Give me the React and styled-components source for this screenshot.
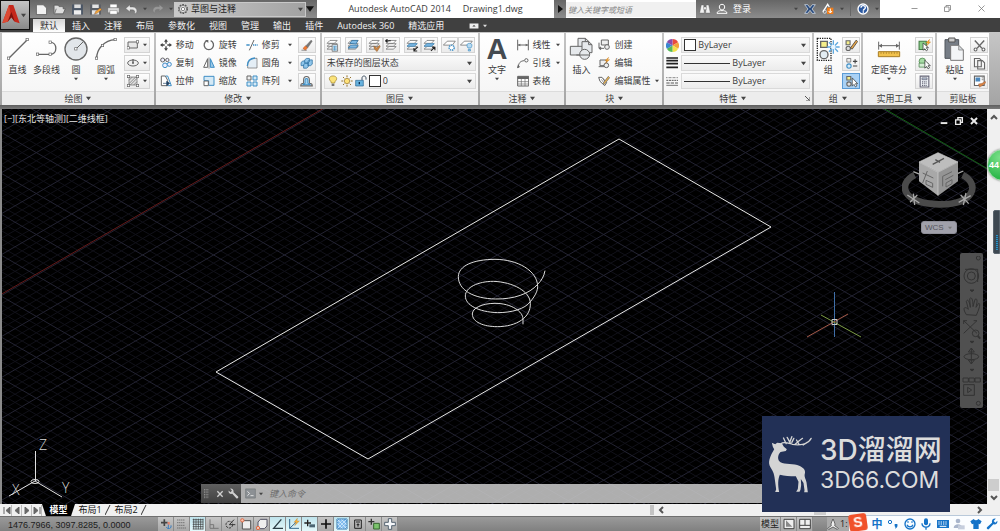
import React from 'react';
import styled, { createGlobalStyle } from 'styled-components';

const GlobalStyle = createGlobalStyle`
  * {
    box-sizing: border-box;
  }
  html,
  body,
  #root {
    height: 100%;
  }
  body {
    margin: 0;
    overflow: hidden;
    font-family: 'Open Sans', 'Noto Sans CJK SC', sans-serif;
    font-size: 9px;
    line-height: 12px;
    color: #3c3c3c;
  }
  button,
  input,
  select {
    font: inherit;
    color: inherit;
    margin: 0;
    padding: 0;
    border: 0;
    border-radius: 0;
    background: none;
  }
  svg {
    display: block;
    flex: none;
  }
`;

const Window = styled.div`
  display: flex;
  flex-direction: column;
  height: 100vh;
  background: #404040;
`;

/* ---------- title bar and tabs ---------- */

const Header = styled.header`
  display: flex;
  flex: none;
  height: 32px;
`;

const AppButton = styled.button`
  display: flex;
  align-items: center;
  width: 30px;
  height: 30px;
  flex: none;
  border: 1px solid #111;
  background: linear-gradient(#c4c4c4, #8a8a8a);
`;

const HeaderRows = styled.div`
  flex: 1;
  min-width: 0;
  display: flex;
  flex-direction: column;
`;

const TitleBar = styled.div`
  display: flex;
  height: 18px;
  background: #fff;
`;

const Steel = styled.div`
  display: flex;
  align-items: center;
  flex: none;
  width: ${(p) => p.$width}px;
  background: linear-gradient(#666, #8c8c8c);
  color: #fff;
`;

const QuickButtons = styled.div`
  display: flex;
  align-items: center;
  gap: 5px;
  width: 144px;
  padding-left: 5px;
`;

const IconButton = styled.button`
  display: flex;
  align-items: center;
  justify-content: center;
  flex: none;
`;

const Workspace = styled.label`
  display: flex;
  align-items: center;
  gap: 2px;
  width: 132px;
  height: 15px;
  padding: 0 2px;
  background: linear-gradient(90deg, #c9c9c9, #a2a2a2);
  border: 1px solid #c8c8c8;
  color: #222;
`;

const PlainSelect = styled.select`
  appearance: none;
  flex: 1;
  min-width: 0;
  height: 12px;
  line-height: 12px;
  outline: none;
`;

const Title = styled.h1`
  flex: 1;
  margin: 0;
  display: flex;
  align-items: center;
  justify-content: center;
  gap: 12px;
  font-size: 9px;
  font-weight: 400;
  white-space: nowrap;
`;

const SearchBox = styled.input`
  width: 130px;
  height: 15px;
  align-self: center;
  background: #f0f0f0;
  font-size: 8px;
  font-style: italic;
  padding: 0 2px;
  outline: none;
  &::placeholder {
    color: #888;
    opacity: 1;
  }
`;

const UserTools = styled.div`
  display: flex;
  align-items: center;
  gap: 5px;
  padding-left: 3px;
`;

const SteelTools = styled.div`
  display: flex;
  align-items: center;
  gap: 6px;
  margin-left: auto;
  padding-right: 1px;
`;

const SteelLine = styled.span`
  width: 1px;
  height: 14px;
  background: #666;
`;

const WindowButtons = styled.div`
  display: flex;
  align-items: center;
  justify-content: space-around;
  width: 120px;
  padding: 0 2px 2px 18px;
`;

const Tabs = styled.nav`
  display: flex;
  align-items: flex-end;
  height: 14px;
  padding-left: 3px;
  background: #404040;
`;

const Tab = styled.button`
  height: 13px;
  line-height: 12px;
  padding: 0 7px;
  white-space: nowrap;
  color: ${(p) => (p.$active ? '#333' : '#f0f0f0')};
  background: ${(p) => (p.$active ? 'linear-gradient(#d5d5d5, #fff)' : 'none')};
`;

const TabMenu = styled(IconButton)`
  gap: 4px;
  height: 13px;
  padding-left: 18px;
`;

/* ---------- ribbon ---------- */

const Ribbon = styled.section`
  display: flex;
  flex: none;
  height: 77px;
  gap: 2px;
  padding: 1px 11px 4px 2px;
  background: linear-gradient(#c6c6c6, #a4a4a4 73px, #5f5f5f 73px, #7a7a7a);
`;

const PanelBox = styled.section`
  flex: ${(p) => p.$grow} 1 0;
  min-width: 0;
  display: flex;
  flex-direction: column;
  background: #fff;
`;

const PanelBody = styled.div`
  display: flex;
  flex: 1;
  padding: 3px ${(p) => p.$right || 2}px 0 ${(p) => p.$left || 2}px;
  gap: ${(p) => p.$gap || 0}px;
  background: linear-gradient(#fff, #f6f6f6);
`;

const PanelTitle = styled.button`
  display: flex;
  align-items: center;
  justify-content: center;
  gap: 4px;
  height: 14px;
  background: #ededed;
  border-top: 1px solid #dcdcdc;
`;

const Launcher = styled.span`
  margin-right: 2px;
`;

const TitleLabel = styled.span`
  display: flex;
  align-items: center;
  justify-content: center;
  gap: 4px;
  flex: 1;
`;

const BigTool = styled.button`
  display: flex;
  flex-direction: column;
  align-items: center;
  flex: none;
  width: ${(p) => p.$width || 30}px;
  padding-top: 1px;
  white-space: nowrap;
  & > span {
    margin: 3px 0 1px;
  }
`;

const Stack = styled.div`
  display: grid;
  grid-template-rows: repeat(3, 18px);
  align-items: center;
  flex: none;
  margin-left: ${(p) => (p.$push ? 'auto' : 0)};
`;

const SmallTool = styled.button`
  display: flex;
  align-items: center;
  gap: 4px;
  width: ${(p) => p.$width}px;
  white-space: nowrap;
  & > svg:nth-of-type(2) {
    margin-left: auto;
  }
`;

const FramedTool = styled.button`
  display: flex;
  align-items: center;
  justify-content: center;
  width: ${(p) => p.$width || 18}px;
  height: 16px;
  gap: 4px;
  border: 1px solid ${(p) => (p.$active ? '#5b9bd5' : '#d4d4d4')};
  background: ${(p) => (p.$active ? '#a9d1f5' : 'linear-gradient(#fdfdfd, #ebebeb)')};
`;

const LayerPanel = styled.div`
  display: grid;
  grid-template-rows: repeat(3, 18px);
  align-items: center;
  flex: 1;
  min-width: 0;
`;

const ToolRow = styled.div`
  display: flex;
  justify-content: space-between;
`;

const ToolGroup = styled.div`
  display: flex;
`;

const Combo = styled.label`
  display: flex;
  align-items: center;
  gap: 2px;
  min-width: 0;
  height: 16px;
  padding: 0 3px 0 2px;
  border: 1px solid #dadada;
  background: linear-gradient(#fafafa, #ececec);
`;

const PropertyGrid = styled.div`
  display: grid;
  grid-template-columns: 13px minmax(0, 1fr);
  grid-template-rows: repeat(3, 18px);
  align-items: center;
  flex: 1;
  column-gap: 2px;
`;

const Swatch = styled.span`
  flex: none;
  width: 12px;
  height: 12px;
  border: 1px solid #333;
  background: #fff;
`;

const LineSample = styled.span`
  flex: none;
  width: 46px;
  height: 1px;
  background: #333;
`;

/* ---------- drawing area ---------- */

const Workarea = styled.main`
  display: flex;
  flex: 1;
  min-height: 0;
  position: relative;
  border-left: 2px solid #8a8a8a;
`;

const Canvas = styled.div`
  position: relative;
  flex: 1;
  min-width: 0;
  overflow: hidden;
  background: #000;
`;

const Drawing = styled.svg`
  position: absolute;
  inset: 0;
  width: 100%;
  height: 100%;
`;

const ViewLabel = styled.div`
  position: absolute;
  left: 2px;
  top: 4px;
  color: #e4e4e4;
`;

const MdiButtons = styled.div`
  position: absolute;
  right: 8px;
  top: 7px;
  display: flex;
  gap: 5px;
`;

const ViewCube = styled.div`
  position: absolute;
  right: 11px;
  top: 42px;
`;

const WcsSelect = styled.button`
  position: absolute;
  right: 30px;
  top: 112px;
  display: flex;
  align-items: center;
  justify-content: space-between;
  width: 36px;
  height: 13px;
  padding: 0 4px 0 3px;
  border: 1px solid #8e8e98;
  border-radius: 3px;
  background: #a0a0aa;
  color: #54545c;
  font-family: 'Liberation Sans', sans-serif;
  font-size: 8px;
`;

const NavBar = styled.div`
  position: absolute;
  right: 4px;
  top: 144px;
  width: 23px;
  height: 155px;
  display: flex;
  flex-direction: column;
  align-items: center;
  justify-content: center;
  border-radius: 2px;
  background: #505050;
`;

const CommandLine = styled.div`
  position: absolute;
  left: 199px;
  right: 90px;
  bottom: 1px;
  display: flex;
  height: 19px;
  background: rgba(200, 200, 200, 0.87);
`;

const CommandHandle = styled.div`
  display: flex;
  align-items: center;
  gap: 4px;
  width: 40px;
  padding-left: 1px;
  background: linear-gradient(#606060, #404040);
`;

const CommandPrompt = styled.label`
  display: flex;
  align-items: center;
  flex: 1;
  gap: 3px;
  padding-left: 4px;
`;

const CommandInput = styled.input`
  flex: 1;
  min-width: 0;
  margin-left: 3px;
  font-style: italic;
  outline: none;
  &::placeholder {
    color: #6d6d6d;
    opacity: 1;
  }
`;

const VerticalScroll = styled.div`
  flex: none;
  display: flex;
  flex-direction: column;
  align-items: center;
  width: 13px;
  padding: 4px 0 2px;
  background: #f0f0f0;
`;

const VerticalThumb = styled.div`
  width: 11px;
  height: 12px;
  margin: auto 0 3px;
  background: #cdcdcd;
`;

const Ball = styled.div`
  position: absolute;
  right: -19px;
  top: 40px;
  width: 32px;
  height: 32px;
  border: 1px solid #9fd6a8;
  border-radius: 50%;
  background: radial-gradient(circle at 40% 25%, #7be08a, #2db84a 70%);
  color: #fff;
  font: bold 9px/30px 'Liberation Sans', sans-serif;
  padding-left: 1px;
  box-shadow: 0 0 2px #777;
`;

const SideMeter = styled.div`
  position: absolute;
  right: 0;
  top: 101px;
  width: 7px;
  height: 44px;
  padding: 24px 0 3px 2px;
  border: 1px solid #59636c;
  background: #3d4750;
  border-radius: 2px 0 0 2px;
`;

const MeterFill = styled.div`
  width: 2px;
  height: 15px;
  background: repeating-linear-gradient(#2b91c6 0 1px, #24566f 1px 2px);
`;

const Watermark = styled.aside`
  position: absolute;
  right: 50px;
  bottom: -8px;
  z-index: 2;
  display: flex;
  align-items: center;
  gap: 6px;
  width: 188px;
  height: 96px;
  padding-left: 5px;
  background: #223056;
  color: #dcdcdc;
`;

const WatermarkText = styled.div`
  display: flex;
  flex-direction: column;
  white-space: nowrap;
`;

const Brand = styled.strong`
  font-family: Inter, 'Noto Sans CJK SC', sans-serif;
  font-size: 28px;
  line-height: 32px;
  font-weight: 500;
`;

const Domain = styled.span`
  font-family: Inter, sans-serif;
  font-size: 23px;
  line-height: 28px;
  font-weight: 400;
`;

/* ---------- bottom rows ---------- */

const LayoutRow = styled.div`
  display: flex;
  align-items: center;
  flex: none;
  height: 12px;
  padding: 0 16px 0 2px;
  background: #f0f0f0;
`;

const NavArrow = styled(IconButton)`
  width: 10px;
  height: 11px;
  border-right: 1px solid #bbb;
`;

const LayoutTab = styled.button`
  display: flex;
  justify-content: center;
  width: ${(p) => (p.$active ? 33 : 30)}px;
  height: 12px;
  line-height: 12px;
  font-weight: ${(p) => (p.$active ? 700 : 400)};
  color: ${(p) => (p.$active ? '#fff' : '#111')};
  background: ${(p) => (p.$active ? '#000' : 'none')};
  clip-path: ${(p) => (p.$active ? 'polygon(0 0, 100% 0, 88% 100%, 12% 100%)' : 'none')};
`;

const Divider = styled.div`
  width: 4px;
  height: 10px;
  margin-right: 3px;
  background: #c4c4c4;
`;

const ScrollTrack = styled.div`
  flex: 0 1 327px;
  display: flex;
  align-items: center;
  justify-content: space-between;
`;

const ScrollThumb = styled.div`
  width: 12px;
  height: 10px;
  margin: 0 150px 0 auto;
  background: #cdcdcd;
`;

const RowFill = styled.div`
  flex: 1;
`;

const StatusBar = styled.footer`
  display: flex;
  align-items: stretch;
  flex: none;
  height: 15px;
  border-top: 1px solid #6f6f6f;
  background: linear-gradient(#9a9a9a, #808080);
`;

const Coordinates = styled.output`
  width: 158px;
  padding-left: 8px;
  line-height: 16px;
  color: #1c1c1c;
  font-family: 'Liberation Sans', sans-serif;
  white-space: nowrap;
`;

const StatusToggle = styled.button`
  display: flex;
  align-items: center;
  justify-content: center;
  flex: none;
  width: ${(p) => p.$width || 16}px;
  border: solid #8b8b8b;
  border-width: 0 1px 0 0;
  background: ${(p) => (p.$active ? 'linear-gradient(#bfe3ec, #e4f8fb)' : 'linear-gradient(#c6c6c6, #a8a8a8)')};
  color: #222;
`;

const StatusRight = styled.div`
  display: flex;
  margin-left: auto;
  padding-right: 151px;
`;

const ScaleButton = styled.button`
  display: flex;
  align-items: center;
  gap: 1px;
  width: 22px;
  margin-left: 14px;
  background: #aaa;
  color: #222;
`;

const InputMethod = styled.div`
  position: fixed;
  right: 0;
  bottom: 0;
  z-index: 3;
  display: flex;
  align-items: center;
  justify-content: space-between;
  width: 151px;
  height: 16px;
  padding: 0 2px 0 0;
  border-top: 1px solid #b9c9da;
  background: #fbfdff;
  color: #1673c8;
`;

const SogouLogo = styled.div`
  align-self: flex-end;
  width: 18px;
  height: 17px;
  border-radius: 3px;
  background: #f0512a;
  color: #fff;
  font: bold 14px/16px 'Liberation Sans', sans-serif;
  text-align: center;
  transform: rotate(-8deg);
`;

const ImeMode = styled.button`
  font-size: 11px;
  font-weight: 700;
`;

/* ---------- icons, drawn on a 36 unit grid (small) or 72 unit grid (large) ---------- */

const G = '#666';
const B = '#3f8fc6';
const node = (x, y) => <rect x={x - 4} y={y - 4} width="7" height="7" fill="#fff" stroke={G} strokeWidth="2" />;
const sheets = (
  <g fill="#fff" stroke={G} strokeWidth="2">
    <path d="M3 28l8-7h20l-8 7z" />
    <path d="M3 20l8-7h20l-8 7z" />
    <path d="M3 12l8-8h20l-8 8z" />
  </g>
);

const icons = {
  // quick access
  new: <path d="M4 5h19l9 9v18H4z" fill="#f2f2f2" stroke="#555" strokeWidth="2" />,
  open: <path d="M3 30V6h11l3 4h11v6h6l-6 14zM9 16l-4 12" fill="#ddd" stroke="#555" strokeWidth="2" />,
  save: <><path d="M3 4h30v28H3z" fill="#4b5665" /><path d="M9 4h18v10H9z" fill="#ddd" /><path d="M8 20h20v12H8z" fill="#eee" /></>,
  saveAs: <><path d="M3 4h30v28H3z" fill="#5a5f66" /><path d="M9 4h18v10H9zM8 20h20v12H8z" fill="#e4e4e4" /><path d="M15 31l4-8 12-9 4 5-12 9z" fill="#f1a63a" stroke="#743" /></>,
  print: <><path d="M9 4h18v9H9z" fill="#fff" /><path d="M2 13h32v14H2z" fill="#d8d8d8" stroke="#444" /><path d="M8 21h20v10H8z" fill="#fff" stroke="#555" /></>,
  undo: <path d="M2 15L14 5v6h7c8 0 12 6 12 11s-3 7-7 8c3-7 0-11-6-11h-6v6z" fill="#e6e6e6" stroke="#555" />,
  redo: <path d="M34 15L22 5v6h-7C7 11 3 17 3 22s3 7 7 8c-3-7 0-11 6-11h6v6z" fill="#999" stroke="#7a7a7a" />,
  gear: <><circle cx="18" cy="18" r="13" fill="none" stroke="#555" strokeWidth="4" strokeDasharray="5 3.2" /><circle cx="18" cy="18" r="11" fill="#ddd" stroke="#555" strokeWidth="2" /><circle cx="18" cy="18" r="5" fill="#fff" stroke="#555" strokeWidth="2" /></>,
  binoculars: <g fill="#f2f2f2" stroke="#555"><path d="M7 6h7l2 24H2zM22 6h7l5 24H20z" /><path d="M14 12h8v8h-8z" /></g>,
  user: <g fill="none" stroke="#fff" strokeWidth="3"><path d="M18 4c-6 0-8 4-8 8s3 9 8 9 8-5 8-9-2-8-8-8zM3 31c0-6 6-7 10-8h10c4 1 10 2 10 8z" /></g>,
  exchange: <path d="M2 5h9l7 9 7-9h9L24 18l10 13h-9l-7-9-7 9H2l10-13z" fill="#27497c" stroke="#e4edf8" strokeWidth="2" />,
  app360: <><path d="M3 26L17 4l5 8" fill="none" stroke="#fff" strokeWidth="4" /><circle cx="8" cy="26" r="5" fill="none" stroke="#fff" strokeWidth="2" /><path d="M15 14h19v19H15z" fill="#ee7d1c" /><path d="M25 17v12m-5-5l5 6 5-6" fill="none" stroke="#fff" strokeWidth="3" /></>,
  help: <><circle cx="18" cy="18" r="15" fill="#2c59a0" stroke="#fff" strokeWidth="4" /><path d="M12 14c0-8 13-8 13 0 0 5-6 4-6 9M19 25v4" fill="none" stroke="#fff" strokeWidth="4" /></>,
  ribbonToggle: <><path d="M2 9h32v18H2z" fill="#eee" /><path d="M12 20l6-6 6 6z" fill="#333" /></>,
  minimize: <path d="M6 18h24" stroke="#777" strokeWidth="3" />,
  restore: <path d="M6 12h18v18H6zM12 12V6h18v18h-6" fill="none" stroke="#777" strokeWidth="3" />,
  close: <path d="M6 6l24 24M30 6L6 30" stroke="#777" strokeWidth="3" />,

  // draw
  line: <><path d="M7 65L64 8" stroke={G} strokeWidth="4" />{node(8, 64)}{node(64, 8)}</>,
  polyline: <><path d="M8 52h38c22 0 22-36 0-36" fill="none" stroke={G} strokeWidth="4" />{node(8, 52)}{node(46, 52)}{node(46, 16)}</>,
  circle: <><circle cx="36" cy="36" r="33" fill="#e2e6ea" stroke={G} strokeWidth="4" /><path d="M36 36L58 14" stroke={G} strokeWidth="3" />{node(36, 36)}</>,
  arc: <><path d="M8 64C8 36 30 10 64 8" fill="none" stroke={G} strokeWidth="4" />{node(8, 64)}{node(26, 26)}{node(64, 8)}</>,
  rect: <><path d="M3 9h28v18H3z" fill="#e8e8e8" stroke={G} strokeWidth="3" />{node(4, 27)}{node(32, 9)}</>,
  ellipse: <><ellipse cx="18" cy="18" rx="16" ry="9" fill="#eee" stroke={G} strokeWidth="3" /><path d="M18 6v12M15 18h6" stroke={G} strokeWidth="4" /></>,
  hatch: <><path d="M6 6h24v24H6z" fill="#e0e0e0" stroke={G} strokeWidth="2" /><path d="M6 16L16 6M6 26L26 6M10 30L30 10M20 30l10-10M2 6h4M30 30h4" stroke={G} strokeWidth="2" />{node(5, 5)}{node(32, 32)}{node(32, 5)}{node(5, 32)}</>,

  // modify
  move: <><path d="M18 5v9M18 22v9M5 18h9M22 18h9" stroke="#444" strokeWidth="4" /><path d="M18 0l6 8H12zM18 36l6-8H12zM0 18l8-6v12zM36 18l-8-6v12z" fill="#444" /></>,
  rotate: <><path d="M23 5A14 14 0 1 1 12 5" fill="none" stroke={G} strokeWidth="4" /><path d="M6 3h10v9z" fill={G} /></>,
  trim: <><path d="M1 18h10M21 18h4M27 18h3M32 18h3" stroke={B} strokeWidth="4" /><path d="M10 34L24 3" stroke={G} strokeWidth="3" /></>,
  copy: <g fill="#eef" strokeWidth="3"><circle cx="8" cy="9" r="6" stroke={G} /><circle cx="22" cy="9" r="5" stroke={G} /><circle cx="15" cy="25" r="7" stroke={B} /><circle cx="28" cy="22" r="6" stroke={B} /></g>,
  mirror: <><path d="M14 5v26H2z" fill="#fff" stroke={G} strokeWidth="3" /><path d="M22 5v26h12z" fill="#9cc9e8" stroke={B} strokeWidth="3" /><path d="M18 1v34" stroke={G} strokeWidth="2" /></>,
  fillet: <><path d="M5 33V25C5 12 15 4 26 4h7v29z" fill="#e4eef6" stroke={G} strokeWidth="2" /><path d="M4 27C4 12 13 4 27 3" fill="none" stroke={B} strokeWidth="4" /></>,
  stretch: <><path d="M4 3h12l7 13v16H4z" fill="#fff" stroke={G} strokeWidth="3" /><path d="M17 3h6l11 29H24" fill="none" stroke={B} strokeWidth="3" /><path d="M9 25h12m-1-6l9 6-9 7z" stroke="#246" strokeWidth="2" fill="#246" /></>,
  scale: <><path d="M3 4h30v27H17V17H3z" fill="#d5e9f5" stroke={B} strokeWidth="3" /><path d="M3 18h13v14H3z" fill="#fff" stroke={G} strokeWidth="3" /></>,
  array: <g fill="#eee" strokeWidth="3"><path d="M3 3h12v12H3z" stroke={G} /><path d="M21 3h12v12H21zM3 21h12v12H3zM21 21h12v12H21z" stroke={B} fill="#d5e9f5" /></g>,
  erase: <><path d="M4 31h15" stroke={G} strokeWidth="2" /><path d="M15 20L31 3l3 3-13 19z" fill="#777" stroke={G} /><path d="M8 26l7-7 6 5-6 7z" fill="#ee7b30" stroke="#943" /></>,
  explode: <g fill="#8fc5ea" stroke="#286c9f" strokeWidth="2"><path d="M3 15l5-4h8v9l-5 4H3z" /><path d="M13 8l5-4h8v9l-5 4h-8zM22 12l5-4h7v12l-5 4h-7zM10 21l5-4h8v10l-5 4h-8z" /></g>,
  offset: <><path d="M2 30h32c0-7-5-7-8-7V14c0-13-16-13-16 0v9c-4 0-8 0-8 7z" fill="none" stroke={G} strokeWidth="3" /><path d="M8 27h20c-1-3-6-2-6-5v-8c0-6-8-6-8 0v8c0 4-5 2-6 5z" fill="#a4d2ee" stroke={B} strokeWidth="3" /></>,

  // layers
  layerProps: <>{sheets}<path d="M17 15h15v19H17z" fill="#e9eef2" stroke={G} strokeWidth="2" /><path d="M19 20h11M19 25h11M19 30h11M24 20v12" stroke={B} strokeWidth="2" /></>,
  layerStack: <>{sheets}<path d="M3 25l8-8h20l-6 8zM8 12l6-8h16l-5 10z" fill="#7eb9e4" stroke="#286c9f" strokeWidth="2" /></>,
  layerMatch: <>{sheets}<path d="M16 19l8 5 8-7 2 4-9 14-8-8z" fill="#c88444" stroke="#753" /></>,
  layerPrev: <>{sheets}<path d="M1 5h15M1 5l6-4M1 5l6 4" stroke="#222" strokeWidth="3" /></>,
  layerDown: <>{sheets}<path d="M3 20l8-7h20l-8 7z" fill="#7eb9e4" stroke={B} strokeWidth="2" /><path d="M33 22L22 32m0-7v8h9" fill="none" stroke="#222" strokeWidth="3" /></>,
  layerUp: <>{sheets}<path d="M3 20l8-7h20l-8 7z" fill="#7eb9e4" stroke={B} strokeWidth="2" /><path d="M22 33l10-10m-7 0h8v8" fill="none" stroke="#222" strokeWidth="3" /></>,
  layerFreeze: <><path d="M1 17L12 6h22l-8 11z" fill="#fff" stroke={G} strokeWidth="2" /><circle cx="24" cy="24" r="7" fill="#fff" stroke={B} strokeWidth="4" strokeDasharray="4 2" /></>,
  layerOff: <><path d="M1 17L12 6h22l-8 11z" fill="#fff" stroke={G} strokeWidth="2" /><path d="M26 12c-9 0-7 8-4 13h8c4-5 5-13-4-13zM23 29h6v4h-6z" fill="#b7daf1" stroke={B} strokeWidth="2" /></>,
  bulb: <><path d="M13 24c0-6-6-7-6-13 0-11 22-11 22 0 0 6-6 7-6 13z" fill="#fbe37a" stroke="#9a7b20" strokeWidth="2" /><path d="M14 26h8v7h-8z" fill="#777" /></>,
  sun: <><circle cx="18" cy="18" r="8" fill="#ffe27a" stroke="#94732c" strokeWidth="2" /><path d="M18 1v6M18 29v6M1 18h6M29 18h6M6 6l4 4M26 26l4 4M30 6l-4 4M6 30l4-4" stroke="#94732c" strokeWidth="3" /></>,
  unlock: <><path d="M21 16V9c0-8 12-8 12 0v5" fill="none" stroke="#456" strokeWidth="3" /><path d="M2 16h23v17H2z" fill="#67b2de" stroke="#28658f" strokeWidth="2" /><path d="M13 21v7" stroke="#135" strokeWidth="4" /></>,

  // annotation and blocks
  dim: <><path d="M2 2v32M34 2v32M3 18h30" stroke={G} strokeWidth="3" /><path d="M3 18l7-4v8zM33 18l-7-4v8z" fill={G} /></>,
  leader: <><path d="M3 33C5 17 10 12 22 11" fill="none" stroke={G} strokeWidth="3" /><circle cx="28" cy="10" r="5" fill="#fff" stroke={G} strokeWidth="3" /><path d="M0 34l3-12 6 8z" fill={G} /></>,
  table: <><path d="M2 4h33v29H2z" fill="#fff" stroke={G} strokeWidth="3" /><path d="M2 4h33v8H2z" fill={G} /><path d="M2 20h33M2 27h33M13 12v21M24 12v21" stroke={G} strokeWidth="2" /></>,
  insert: <g fill="#e6e9ec" stroke={G} strokeWidth="3"><path d="M27 4h22l10 9v24H27zM49 4v9h10" /><path d="M4 28h38v26H4z" /><path d="M39 14h20l10 9v24H39zM59 14v9h10" /><circle cx="47" cy="52" r="15" /><path d="M22 54h40" /></g>,
  blockCreate: <><path d="M10 3h21v15H10z" fill="#eee" stroke={G} strokeWidth="3" /><path d="M3 11v17h15M3 28l5-4v8z" fill="none" stroke={G} strokeWidth="3" /><circle cx="27" cy="24" r="7" fill="#eee" stroke={G} strokeWidth="3" /></>,
  blockEdit: <><path d="M6 9h20v17H6zM2 29h16" fill="#eee" stroke={G} strokeWidth="3" /><circle cx="25" cy="25" r="7" fill="#eee" stroke={G} strokeWidth="3" /><path d="M32 1L21 11h6l-5 8 13-11h-6z" fill="#f8a62d" stroke="#b8701c" /></>,
  blockAttr: <><path d="M2 7h10l14 16-6 9L6 19z" fill="#fff" stroke={G} strokeWidth="3" /><path d="M10 13l7 10M14 10l7 10" stroke={G} strokeWidth="2" /><path d="M15 25L31 4l4 4-16 20z" fill="#e8b14c" stroke={G} strokeWidth="2" /></>,

  // properties
  lineWeight: <path d="M1 3h35M1 11h35M1 20h35M1 31h35" stroke="#222" strokeWidth="5" />,
  lineType: <><path d="M1 8h35" stroke="#555" strokeWidth="3" strokeDasharray="2 2" /><path d="M1 16h35" stroke="#555" strokeWidth="3" strokeDasharray="6 2" /><path d="M1 24h35" stroke="#555" strokeWidth="3" strokeDasharray="10 3" /><path d="M1 31h35" stroke="#777" strokeWidth="3" /></>,

  // groups and utilities
  group: <><path d="M4 4h41v66H4z" fill="none" stroke="#222" strokeWidth="4" strokeDasharray="4 3" /><path d="M14 13h20v18H14z" fill="#f5ee89" stroke={G} strokeWidth="4" /><circle cx="24" cy="53" r="12" fill="#e3edf3" stroke={G} strokeWidth="4" /><path d="M52 10v40M33 30h38M39 16l27 28M66 16L39 44" stroke="#5fa9df" strokeWidth="4" /><circle cx="52" cy="30" r="7" fill="#e9f6ff" /></>,
  ungroup: <><path d="M3 5h11v11H3z" fill="#f5ee89" stroke={G} strokeWidth="3" /><circle cx="9" cy="26" r="6" fill="#ddd" stroke={G} strokeWidth="3" /><path d="M15 25L31 3l4 4-15 21z" fill="#e6a549" stroke="#333" strokeWidth="2" /></>,
  groupEdit: <><path d="M5 4h11v10H5z" fill="#eee" stroke={G} strokeWidth="2" /><circle cx="11" cy="25" r="6" fill="#d6ebf8" stroke={B} strokeWidth="3" /><path d="M22 12h12M28 6v12M22 25h12" stroke="#444" strokeWidth="3" /></>,
  groupSelect: <><path d="M5 4h11v10H5z" fill="#f5ee89" stroke={G} strokeWidth="3" /><circle cx="11" cy="25" r="6" fill="#ddd" stroke={G} strokeWidth="3" /><path d="M20 8v23l5-5 4 7 4-3-4-6h6z" fill="#fff" stroke="#333" strokeWidth="2" /></>,
  measure: <><path d="M5 14v24M67 14v24M7 26h58" stroke={G} strokeWidth="3" /><path d="M5 26l10-6v12zM67 26l-10-6v12z" fill={G} /><path d="M4 44h64v15H4z" fill="#f2c24d" stroke="#a67c24" strokeWidth="3" /><path d="M12 45v6M20 45v6M28 45v6M36 45v6M44 45v6M52 45v6M60 45v6" stroke="#a67c24" strokeWidth="2" /></>,
  quickSelect: <><path d="M3 6h20v23H3z" fill="#8bce88" stroke="#447d46" strokeWidth="3" /><path d="M14 11v20l5-4 4 6 4-3-4-6h6z" fill="#fff" stroke="#333" strokeWidth="2" /><path d="M32 1L22 11h6l-4 8 11-11h-5z" fill="#f9ad31" stroke="#b8701c" /></>,
  selectAll: <><circle cx="12" cy="12" r="9" fill="#a6dba4" stroke="#447d46" strokeWidth="2" /><path d="M3 17h25v11H3z" fill="#d5edd4" stroke="#447d46" strokeWidth="2" /><path d="M19 9v22l5-5 4 7 4-3-4-6h6z" fill="#fff" stroke="#333" strokeWidth="2" /></>,
  calc: <><path d="M6 3h24v30H6z" fill="#eef2f6" stroke="#667" strokeWidth="3" /><path d="M11 8h14v5H11z" fill="#b9c9da" stroke="#667" strokeWidth="2" /><path d="M11 19h14M11 24h14M11 29h14" stroke="#667" strokeWidth="3" strokeDasharray="3 2" /></>,
  paste: <><path d="M6 8h41v56H6z" fill="#767d86" stroke="#50565d" strokeWidth="3" /><path d="M17 3h19v12H17z" fill="#ccc" stroke="#555" strokeWidth="3" /><path d="M23 25h24l14 14v31H23z" fill="#f3f5f7" stroke="#777" strokeWidth="3" /><path d="M47 25v14h14z" fill="#d6dade" stroke="#777" strokeWidth="2" /></>,
  cut: <><path d="M5 4l20 22M31 4L11 26" stroke={G} strokeWidth="4" /><circle cx="7" cy="29" r="4" fill="#fff" stroke={G} strokeWidth="3" /><circle cx="29" cy="29" r="4" fill="#fff" stroke={G} strokeWidth="3" /></>,
  copyClip: <path d="M4 4h14l5 5v18H4zM13 10h13l6 6v17H13z" fill="#f4f4f4" stroke={G} strokeWidth="3" />,
  matchProps: <><path d="M4 3h27v26H4z" fill="#fff" stroke={G} strokeWidth="3" /><path d="M7 7h13v11H7z" fill="#4b87bc" /><path d="M24 8h5M24 13h5" stroke={G} strokeWidth="2" /><path d="M15 25l10-2 9-6 1 5-7 6-10 6z" fill="#d88342" stroke="#854" /></>,

  // status bar toggles
  infer: <><path d="M13 4v20M3 14h20" stroke="#444" strokeWidth="5" /><path d="M25 16v14M19 27a7 7 0 1 0 14-5" fill="none" stroke="#3b7fc0" strokeWidth="3" /><path d="M23 12h6v8h-6z" fill="#e8826a" /></>,
  snap: <path d="M4 6h22M4 14h22M4 22h22M4 30h26" stroke="#555" strokeWidth="3" strokeDasharray="3 3" />,
  grid: <path d="M2 5h32M2 12h32M2 19h32M2 26h32M2 33h32M5 2v32M12 2v32M19 2v32M26 2v32M33 2v32" stroke="#333" strokeWidth="2" />,
  ortho: <path d="M6 4v27h26M6 20h11v11" fill="none" stroke="#777" strokeWidth="3" />,
  polar: <><circle cx="16" cy="20" r="10" fill="none" stroke="#333" strokeWidth="3" strokeDasharray="7 3" /><path d="M16 20L30 5M16 20h18" stroke="#333" strokeWidth="3" /></>,
  osnap: <><path d="M7 8h25v25H7z" fill="#eee" stroke="#555" strokeWidth="3" /><circle cx="7" cy="7" r="5" fill="#f7c4b0" stroke="#e06d48" strokeWidth="3" /></>,
  osnap3d: <><path d="M6 12l7-8h20v20l-8 8H6z" fill="#eee" stroke="#556" strokeWidth="3" /><circle cx="6" cy="30" r="5" fill="#f7c4b0" stroke="#e06d48" strokeWidth="3" /></>,
  otrack: <path d="M28 4L5 31h28" fill="none" stroke="#2d3d46" strokeWidth="4" />,
  ducs: <><path d="M5 3v28h28M5 31L25 12" fill="none" stroke="#34678c" strokeWidth="3" /><path d="M28 1L18 13h7l-5 10 14-14h-7z" fill="#f8b33b" stroke="#ad7326" /></>,
  dyn: <><path d="M11 5v20M1 15h20" stroke="#222" strokeWidth="4" /><path d="M16 19h17v9H16z" fill="#4b6573" /></>,
  lwt: <path d="M18 4v28M3 18h30" stroke="#111" strokeWidth="5" />,
  transparency: <><path d="M3 3h30v30H3z" fill="#7cb9ec" stroke="#3478ae" strokeWidth="3" /><path d="M4 12L12 4M4 22L22 4M4 32L32 4M14 32l18-18M24 32l8-8M4 4l28 28M16 4l16 16M4 16l16 16" stroke="#e5f4ff" strokeWidth="2" /></>,
  quickProps: <path d="M8 6h20v25H8zM12 12h12M18 16v10M14 20h8" fill="none" stroke="#222" strokeWidth="3" />,
  cycling: <><path d="M10 2v18M1 11h18" stroke="#333" strokeWidth="4" /><path d="M17 16h17v17H17z" fill="#7cc36d" stroke="#35682f" strokeWidth="3" /></>,
  annoMonitor: <path d="M13 2h10v11h11v10H23v11H13V23H2V13h11z" fill="#f5f7fa" stroke="#566471" strokeWidth="3" />,
  modelView: <><path d="M3 4h30v28H3z" fill="#eee" stroke="#444" strokeWidth="3" /><path d="M9 7v19h19z" fill="#888" /></>,
  layoutView: <><path d="M2 4h32v28H2z" fill="#eee" stroke="#444" strokeWidth="3" /><path d="M18 4v18M2 22h32" stroke="#444" strokeWidth="3" /></>,
  annoScale: <path d="M18 3c6 12 7 18 5 20l11 8-3 3-13-7-13 7-3-3 11-8c-2-2-1-8 5-20z" fill="#eee" stroke="#333" strokeWidth="2" />,

  // input method bar
  punct: <><circle cx="9" cy="12" r="5" fill="none" stroke="#1673c8" strokeWidth="3" /><path d="M23 18h8c2 8-1 12-7 14 2-4 2-5-1-7z" fill="#1673c8" /></>,
  smile: <g fill="none" stroke="#1673c8" strokeWidth="4"><circle cx="18" cy="18" r="15" /><path d="M9 20c3 9 15 9 18 0" /><path d="M12 10v4M24 10v4" /></g>,
  mic: <><rect x="12" y="1" width="12" height="21" rx="6" fill="#1673c8" /><path d="M6 16c0 15 24 15 24 0M18 27v8" fill="none" stroke="#1673c8" strokeWidth="4" /></>,
  keyboard: <><path d="M0 6h36v24H0z" fill="#1673c8" /><path d="M4 12h28M4 18h28" stroke="#fff" strokeWidth="3" strokeDasharray="4 3" /><path d="M8 25h20" stroke="#fff" strokeWidth="3" /></>,
  person: <><circle cx="15" cy="9" r="7" fill="#aab6cc" /><path d="M2 30c0-15 26-15 26 0z" fill="#aab6cc" /><path d="M15 22h20v12H15z" fill="#c6cedd" /></>,
  shirt: <path d="M11 3c4 5 10 5 14 0l10 7-5 9-4-2v16H10V17l-4 2-5-9z" fill="#1673c8" />,
  wrench: <path d="M3 28L18 14c-2-8 4-13 11-12l-6 7 5 5 6-6c2 8-5 13-12 11L8 34c-5 1-7-3-5-6z" fill="#1673c8" />,

  // command line
  cmdClose: <path d="M6 6l24 24M30 6L6 30" stroke="#d0d0d0" strokeWidth="6" />,
  cmdWrench: <path d="M33 28L18 14C20 6 14 1 7 2l6 7-5 5-6-6c-2 8 5 13 12 11l14 15c5 1 7-3 5-6z" fill="#d0d0d0" />,
  grip: <path d="M9 0v36M15 0v36M21 0v36" stroke="#aaa" strokeWidth="3" strokeDasharray="3 3" />,
  prompt: <><path d="M2 3h32v30H2z" fill="#8c9094" stroke="#707477" strokeWidth="2" /><path d="M8 11l7 7-7 7M18 25h10" fill="none" stroke="#e8e8e8" strokeWidth="3" /></>,

  mdiMin: <path d="M6 22h24v7H6z" fill="#e8e8e8" />,
  mdiRestore: <path d="M6 14h17v16H6zM14 12V6h16v17h-5" fill="none" stroke="#e8e8e8" strokeWidth="5" />,
  mdiClose: <path d="M7 7l22 22M29 7L7 29" stroke="#e8e8e8" strokeWidth="7" />,
};

const Icon = ({ name, size = 12, grid = 36 }) => (
  <svg width={size} height={size} viewBox={`0 0 ${grid} ${grid}`} fill="none" aria-hidden="true">
    {icons[name]}
  </svg>
);

const Caret = ({ size = 4, color = '#444' }) => (
  <svg width={size} height={size} viewBox="0 0 6 6" aria-hidden="true">
    <path d="M0 1h6L3 5z" fill={color} />
  </svg>
);

const Chevron = ({ turn = 0 }) => (
  <svg width="8" height="8" viewBox="0 0 8 8" aria-hidden="true">
    <path d="M1 6l3-3 3 3" transform={`rotate(${turn} 4 4)`} fill="none" stroke="#555" strokeWidth="2" />
  </svg>
);

const Logo = () => (
  <svg width="20" height="22" viewBox="0 0 60 66" aria-hidden="true">
    <path d="M24 3h13l19 55-15-5-10-13-11 13-16 4z" fill="#c5281c" />
    <path d="M24 3L4 57l16-4 11-13-3-14z" fill="#dc4a34" />
    <path d="M31 24l6 16 4 13-10-13-11 13 6-16z" fill="#7e120d" />
  </svg>
);

const ColorWheel = () => (
  <svg width="13" height="13" viewBox="-6 -6 12 12" aria-hidden="true">
    {['#e84b3c', '#f2a33a', '#f3e24a', '#58b957', '#3b86d1', '#8a4ba8'].map((c, i) => (
      <path key={c} d="M0 0L0-6A6 6 0 0 1 5.2-3z" fill={c} transform={`rotate(${i * 60})`} />
    ))}
  </svg>
);

const LetterA = styled.span`
  && {
    margin: 0;
  }
  height: 24px;
  font: bold 29px/24px 'Liberation Sans', sans-serif;
  color: #444a50;
`;

const Panel = ({ grow, title, caret = true, launcher, children, ...body }) => (
  <PanelBox $grow={grow}>
    <PanelBody $left={body.left} $right={body.right} $gap={body.gap}>
      {children}
    </PanelBody>
    <PanelTitle>
      <TitleLabel>
        {title}
        {caret && <Caret size={5} />}
      </TitleLabel>
      {launcher && (
        <Launcher>
          <svg width="5" height="5" viewBox="0 0 5 5">
            <path d="M0 0l4 4M5 1v4H1" stroke="#555" fill="none" />
          </svg>
        </Launcher>
      )}
    </PanelTitle>
  </PanelBox>
);

const Big = ({ icon, label, width, caret }) => (
  <BigTool $width={width}>
    <Icon name={icon} size={24} grid={72} />
    <span>{label}</span>
    {caret && <Caret />}
  </BigTool>
);

const ToolColumn = ({ items, width }) => (
  <Stack>
    {items.map(([icon, label, caret]) => (
      <SmallTool key={label} $width={width}>
        <Icon name={icon} />
        {label}
        {caret && <Caret />}
      </SmallTool>
    ))}
  </Stack>
);

const FramedColumn = ({ items, active }) => (
  <Stack $push>
    {items.map((icon) => (
      <FramedTool key={icon} aria-label={icon} $active={icon === active}>
        <Icon name={icon} size={13} />
      </FramedTool>
    ))}
  </Stack>
);

const LAYER_TOOLS = [['layerProps'], ['layerStack'], ['layerMatch', 'layerPrev'], ['layerDown', 'layerUp'], ['layerFreeze', 'layerOff']];
const MENU = ['插入', '注释', '布局', '参数化', '视图', '管理', '输出', '插件', 'Autodesk 360', '精选应用'];
const TOGGLES = [
  'infer', 'snap', 'grid', 'ortho', 'polar', 'osnap', 'osnap3d', 'otrack', 'ducs', 'dyn',
  'lwt', 'transparency', 'quickProps', 'cycling', 'annoMonitor',
];
const TOGGLES_ON = ['grid', 'otrack', 'ducs', 'dyn', 'transparency'];

const TopBar = () => (
  <Header>
    <AppButton aria-label="menu">
      <Logo />
      <Caret size={5} />
    </AppButton>
    <HeaderRows>
      <TitleBar>
        <Steel $width={287}>
          <QuickButtons>
            {['new', 'open', 'save', 'saveAs', 'print', 'undo'].map((name) => (
              <IconButton key={name} aria-label={name}>
                <Icon name={name} size={13} />
              </IconButton>
            ))}
            <Caret size={4} />
            <IconButton aria-label="redo">
              <Icon name="redo" />
            </IconButton>
            <Caret size={4} />
          </QuickButtons>
          <Workspace>
            <Icon name="gear" />
            <PlainSelect aria-label="workspace">
              <option>草图与注释</option>
            </PlainSelect>
            <Caret size={5} />
          </Workspace>
          <IconButton aria-label="customize">
            <Caret size={8} color="#111" />
          </IconButton>
        </Steel>
        <Title>
          <span>Autodesk AutoCAD 2014</span>
          <span>Drawing1.dwg</span>
        </Title>
        <Steel $width={12}>
          <svg width="12" height="8" viewBox="0 0 12 8">
            <path d="M4 0l5 4-5 4z" fill="#111" />
          </svg>
        </Steel>
        <SearchBox aria-label="search" placeholder="键入关键字或短语" />
        <Steel $width={184}>
          <UserTools>
            <Icon name="binoculars" />
            <Icon name="user" />
            <IconButton>登录</IconButton>
          </UserTools>
          <SteelTools>
            <Caret size={4} />
            <Icon name="exchange" />
            <Icon name="app360" />
            <Caret size={4} />
            <SteelLine />
            <Icon name="help" />
            <Caret size={4} />
          </SteelTools>
        </Steel>
        <WindowButtons>
          {['minimize', 'restore', 'close'].map((name) => (
            <IconButton key={name} aria-label={name}>
              <Icon name={name} size={9} />
            </IconButton>
          ))}
        </WindowButtons>
      </TitleBar>
      <Tabs>
        <Tab $active>默认</Tab>
        {MENU.map((item) => (
          <Tab key={item}>{item}</Tab>
        ))}
        <TabMenu aria-label="ribbon display">
          <Icon name="ribbonToggle" size={10} />
          <Caret size={4} color="#ddd" />
        </TabMenu>
      </Tabs>
    </HeaderRows>
  </Header>
);

const RibbonPanels = () => (
  <Ribbon>
    <Panel grow={152} title="绘图" right={4}>
      <Big icon="line" label="直线" width={27} />
      <Big icon="polyline" label="多段线" width={31} />
      <Big icon="circle" label="圆" width={28} caret />
      <Big icon="arc" label="圆弧" width={32} caret />
      <Stack $push>
        {['rect', 'ellipse', 'hatch'].map((icon) => (
          <FramedTool key={icon} aria-label={icon} $width={26}>
            <Icon name={icon} />
            <Caret size={4} />
          </FramedTool>
        ))}
      </Stack>
    </Panel>
    <Panel grow={164} title="修改" left={4} right={4}>
      <ToolColumn width={43} items={[['move', '移动'], ['copy', '复制'], ['stretch', '拉伸']]} />
      <ToolColumn width={43} items={[['rotate', '旋转'], ['mirror', '镜像'], ['scale', '缩放']]} />
      <ToolColumn width={46} items={[['trim', '修剪', true], ['fillet', '圆角', true], ['array', '阵列', true]]} />
      <FramedColumn items={['erase', 'explode', 'offset']} />
    </Panel>
    <Panel grow={156} title="图层">
      <LayerPanel>
        <ToolRow>
          {LAYER_TOOLS.map((group) => (
            <ToolGroup key={group[0]}>
              {group.map((icon) => (
                <FramedTool key={icon} aria-label={icon} $width={17}>
                  <Icon name={icon} size={13} />
                </FramedTool>
              ))}
            </ToolGroup>
          ))}
        </ToolRow>
        <Combo>
          <PlainSelect aria-label="layer state">
            <option>未保存的图层状态</option>
          </PlainSelect>
          <Caret size={5} />
        </Combo>
        <Combo>
          <Icon name="bulb" />
          <Icon name="sun" />
          <Icon name="unlock" />
          <Swatch />
          <PlainSelect aria-label="layer">
            <option>0</option>
          </PlainSelect>
          <Caret size={5} />
        </Combo>
      </LayerPanel>
    </Panel>
    <Panel grow={85} title="注释" gap={4}>
      <BigTool $width={31}>
        <LetterA>A</LetterA>
        <span>文字</span>
        <Caret />
      </BigTool>
      <ToolColumn width={43} items={[['dim', '线性', true], ['leader', '引线', true], ['table', '表格']]} />
    </Panel>
    <Panel grow={96} title="块" gap={4}>
      <Big icon="insert" label="插入" width={26} />
      <ToolColumn width={61} items={[['blockCreate', '创建'], ['blockEdit', '编辑'], ['blockAttr', '编辑属性', true]]} />
    </Panel>
    <Panel grow={148} title="特性" launcher>
      <PropertyGrid>
        <ColorWheel />
        <Combo>
          <Swatch />
          <PlainSelect aria-label="color">
            <option>ByLayer</option>
          </PlainSelect>
          <Caret size={5} />
        </Combo>
        <Icon name="lineWeight" />
        <Combo>
          <LineSample />
          <PlainSelect aria-label="line weight">
            <option>ByLayer</option>
          </PlainSelect>
          <Caret size={5} />
        </Combo>
        <Icon name="lineType" />
        <Combo>
          <LineSample />
          <PlainSelect aria-label="line type">
            <option>ByLayer</option>
          </PlainSelect>
          <Caret size={5} />
        </Combo>
      </PropertyGrid>
    </Panel>
    <Panel grow={47} title="组" left={1} right={1}>
      <Big icon="group" label="组" width={26} />
      <FramedColumn items={['ungroup', 'groupEdit', 'groupSelect']} active="groupSelect" />
    </Panel>
    <Panel grow={72} title="实用工具">
      <Big icon="measure" label="定距等分" width={48} caret />
      <FramedColumn items={['quickSelect', 'selectAll', 'calc']} />
    </Panel>
    <Panel grow={52} title="剪贴板" caret={false} right={1}>
      <Big icon="paste" label="粘贴" width={31} caret />
      <FramedColumn items={['cut', 'copyClip', 'matchProps']} />
    </Panel>
  </Ribbon>
);

// isometric grid: both line families cross every STEP pixels down the left edge
const STEP = 8.19;
const SLOPE = 0.5774;
const SPAN = 2400;
const ORIGIN = { x: 36.3, y: 152.6 };

const gridPath = (major) => {
  let d = '';
  for (let i = -180; i < 260; i++) {
    if ((i % 5 === 0) !== major) continue;
    const y = ORIGIN.y + i * STEP;
    const left = ORIGIN.x * SLOPE;
    const run = SPAN * SLOPE;
    d += `M0 ${(y - left).toFixed(2)}l${SPAN} ${run.toFixed(2)}M0 ${(y + left).toFixed(2)}l${SPAN} ${(-run).toFixed(2)}`;
  }
  return d;
};

const MINOR_GRID = gridPath(false);
const MAJOR_GRID = gridPath(true);

const Model = () => (
  <Drawing aria-hidden="true">
    <g transform="translate(-2 -109)" fill="none">
      <path d={MINOR_GRID} stroke="#111119" />
      <path d={MAJOR_GRID} stroke="#232332" />
      <path d="M0 295L324 108" stroke="#641a1a" />
      <path d="M883 108l110 64" stroke="#146414" />
      <path d="M619 139l152 88-403 232-152-87z" stroke="#e8e8e8" />
      <path
        transform="translate(430 240) scale(.3333)"
        d="M345 92C342 110 334 122 323 133C298 162 250 178 197 177C130 176 85 150 85 110C85 78 130 58 195 58C262 58 323 92 323 140C323 150 318 165 301 185C285 207 245 218 203 218C145 216 106 195 106 168C106 142 145 124 190 124C250 126 301 155 301 190C303 232 260 260 202 260C160 260 127 246 127 222C127 205 155 190 195 190C245 190 279 215 279 237V253"
        stroke="#dcdcdc"
        strokeWidth="3"
      />
      {/* UCS icon */}
      <g stroke="#e0e0e0">
        <path d="M35.5 451v30M35 481L9 496M35 481l27 16" />
        <ellipse cx="35" cy="481.5" rx="4" ry="2" />
      </g>
      <g fill="#d8d8d8" fontFamily="Open Sans, sans-serif" fontWeight="300" fontSize="14">
        <text x="39" y="450">Z</text>
        <text x="12" y="495">X</text>
        <text x="62" y="493">Y</text>
      </g>
      {/* crosshair */}
      <path d="M834.5 292v45" stroke="#3f6fa8" />
      <path d="M807 337l41-23" stroke="#a55a48" />
      <path d="M821 315l40 22" stroke="#7c9c46" />
      <path d="M832 319.5h5v5h-5z" stroke="#c8c8c8" />
    </g>
  </Drawing>
);

const Cube = () => (
  <ViewCube>
    <svg width="74" height="66" viewBox="0 0 222 198" aria-hidden="true">
      <path d="M38 72C-14 98 0 158 110 160s124-62 72-88" fill="none" stroke="#4a4a4a" strokeWidth="20" />
      <path d="M16 132l36 24M24 154l22-22M34 128l4 34M170 154l36-20M176 132l24 26M192 126l-8 36M34 62l20 8M166 68l18-8" stroke="#a8a8a8" strokeWidth="4" />
      <path d="M108 5l60 28-60 31-57-31z" fill="#bdbdbd" />
      <path d="M108 64l60-31v58l-60 43z" fill="#949494" />
      <path d="M108 64L51 33v58l57 43z" fill="#a8a8a8" />
      <path d="M108 5l60 28-60 31-57-31zM108 64v70" fill="none" stroke="#d4d4d4" strokeWidth="2" />
      <path d="M92 40l34-18M100 26l14 8" stroke="#555" strokeWidth="4" />
      <path d="M62 66l32 15M76 60L62 96M72 88l20 9v12l-20-9zM122 76l28-14M122 76v30M130 86l24-13M132 96l18-10v12l-18 10z" fill="none" stroke="#666" strokeWidth="3" />
    </svg>
  </ViewCube>
);

const NavTools = () => (
  <NavBar>
    <svg width="21" height="150" viewBox="0 0 63 450" fill="none" stroke="#333" strokeWidth="3" aria-hidden="true">
      <circle cx="52" cy="6" r="6" />
      <circle cx="31" cy="60" r="22" />
      <circle cx="31" cy="60" r="12" />
      <path d="M12 40h38v38" />
      <path d="M27 102h12l-6 5zM27 256h12l-6 5zM27 340h12l-6 5z" fill="#333" />
      <path d="M16 176C2 154 12 150 22 160l-6-24c4-8 9-2 12 18l-2-26c5-6 10 0 10 24l6-22c7-3 8 3 3 24l8-12c8 0-1 22-7 36z" />
      <path d="M8 194l40 38M48 194L8 232M8 194v10M8 194h10M48 194H38" />
      <circle cx="44" cy="232" r="10" />
      <path d="M50 240l8 8" strokeWidth="6" />
      <path d="M31 276v48M31 276l-9 12h18zM31 324l-9-12h18z" />
      <ellipse cx="31" cy="302" rx="22" ry="9" />
      <path d="M6 366h16v12H6zM24 366h16v12H24zM42 366h16v12H42zM8 386h32v32H8zM20 394l12 8-12 8z" />
      <circle cx="52" cy="442" r="6" />
    </svg>
  </NavBar>
);

const Deer = () => (
  <svg width="47" height="60" viewBox="80 95 140 180" aria-hidden="true">
    <path
      d="M94 121l10 5 6-5 14 2 6 10 9 8-3 5-16 3c-9 9-10 24 0 31 12 8 42 3 56 10 14 6 20 14 17 24-3 9 4 18 5 26l4 30h-11l1-6-3-22-8-12 1 18-2 14-3 6h-10l5-8 2-22-8-16c-18 0-34-1-48-5-6 14-6 30-2 52h-12l3-8-5-36c-2-18-11-26-15-36-5-16 6-33 14-48l-4-8z"
      fill="#d4d4d4"
    />
    <path
      d="M122 124c6-8 20-2 34 2 22 4 46 0 56-18M137 124l-8-17M150 123l-10-18M148 119l6-16M164 126c8-8 14-12 22-18M176 127l-8-14M160 108l-6 12M200 120l-12 8"
      fill="none"
      stroke="#d4d4d4"
      strokeWidth="4"
      strokeLinecap="round"
    />
  </svg>
);

const Slash = () => (
  <svg width="6" height="10" viewBox="0 0 6 10" aria-hidden="true">
    <path d="M0 10L5 0" stroke="#333" />
  </svg>
);

const NAV_ARROWS = ['M1 0v7M7 0L3 3.5 7 7z', 'M6 0L2 3.5 6 7z', 'M2 0l4 3.5L2 7z', 'M1 0l4 3.5L1 7zM7 0v7'];

const App = () => {
  return (
    <>
      <GlobalStyle />
      <Window>
        <TopBar />
        <RibbonPanels />
        <Workarea>
          <Canvas>
            <Model />
            <ViewLabel>[−][东北等轴测][二维线框]</ViewLabel>
            <MdiButtons>
              {['mdiMin', 'mdiRestore', 'mdiClose'].map((name) => (
                <IconButton key={name} aria-label={name}>
                  <Icon name={name} size={10} />
                </IconButton>
              ))}
            </MdiButtons>
            <Cube />
            <WcsSelect>
              WCS
              <Caret size={4} color="#777" />
            </WcsSelect>
            <NavTools />
            <CommandLine>
              <CommandHandle>
                <Icon name="grip" size={10} />
                <Icon name="cmdClose" size={8} />
                <Icon name="cmdWrench" size={11} />
              </CommandHandle>
              <CommandPrompt>
                <Icon name="prompt" size={11} />
                <Caret size={4} />
                <CommandInput aria-label="command" placeholder="键入命令" />
              </CommandPrompt>
            </CommandLine>
          </Canvas>
          <VerticalScroll>
            <Chevron />
            <VerticalThumb />
            <Chevron turn={180} />
          </VerticalScroll>
          <Ball>44</Ball>
          <SideMeter>
            <MeterFill />
          </SideMeter>
          <Watermark>
            <Deer />
            <WatermarkText>
              <Brand>3D溜溜网</Brand>
              <Domain>3D66.COM</Domain>
            </WatermarkText>
          </Watermark>
        </Workarea>
        <LayoutRow>
          {NAV_ARROWS.map((d) => (
            <NavArrow key={d} aria-label="layout scroll">
              <svg width="8" height="7" viewBox="0 0 8 7">
                <path d={d} fill="#666" stroke="#666" />
              </svg>
            </NavArrow>
          ))}
          <LayoutTab $active>模型</LayoutTab>
          <LayoutTab>布局1</LayoutTab>
          <Slash />
          <LayoutTab>布局2</LayoutTab>
          <Slash />
          <RowFill />
          <Divider />
          <ScrollTrack>
            <Chevron turn={-90} />
            <ScrollThumb />
            <Chevron turn={90} />
          </ScrollTrack>
        </LayoutRow>
        <StatusBar>
          <Coordinates>1476.7966, 3097.8285, 0.0000</Coordinates>
          {TOGGLES.map((name) => (
            <StatusToggle key={name} aria-label={name} $active={TOGGLES_ON.includes(name)}>
              <Icon name={name} />
            </StatusToggle>
          ))}
          <StatusRight>
            <StatusToggle $width={21}>模型</StatusToggle>
            <StatusToggle aria-label="model view">
              <Icon name="modelView" />
            </StatusToggle>
            <StatusToggle aria-label="layout view">
              <Icon name="layoutView" />
            </StatusToggle>
            <ScaleButton>
              <Icon name="annoScale" />
              1:
            </ScaleButton>
          </StatusRight>
        </StatusBar>
        <InputMethod>
          <SogouLogo>S</SogouLogo>
          <ImeMode>中</ImeMode>
          {['punct', 'smile', 'mic', 'keyboard', 'person', 'shirt', 'wrench'].map((name) => (
            <IconButton key={name} aria-label={name}>
              <Icon name={name} />
            </IconButton>
          ))}
        </InputMethod>
      </Window>
    </>
  );
};

export default App;
